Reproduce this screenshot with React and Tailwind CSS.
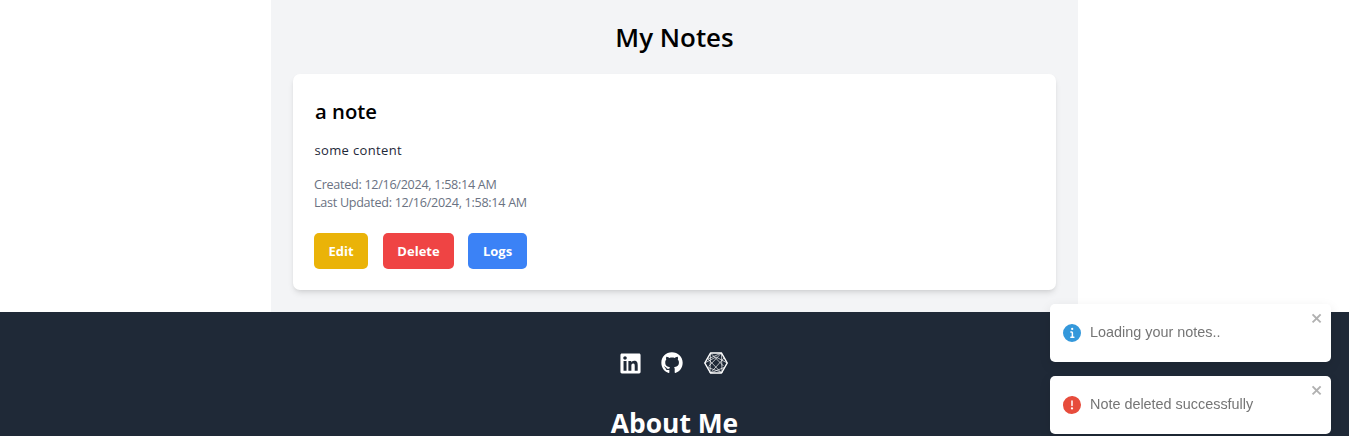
import React from 'react';
import { FaLinkedin, FaGithub } from 'react-icons/fa';

const segoe = "font-['Segoe_UI','Open_Sans','Noto_Sans',sans-serif]";

function NetworkIcon() {
  return (
    <svg viewBox="0 0 24 22" className="h-[22px] w-6" fill="none" stroke="#fff" strokeLinejoin="round">
      <path d="M6.5 1h11L23.2 11l-5.7 10h-11L.8 11z" strokeWidth="1.5" />
      <path
        d="M6.5 1l13 13M17.5 1L4.5 14.5M6.5 21L20 6M17.5 21L4 7M6.5 1L6 21M17.5 1L18 21M4 7L17.5 1M4 15.5l14 5M20 15.5L6.5 21M.8 11L12 5l11.2 6"
        strokeWidth=".8"
        opacity=".85"
      />
    </svg>
  );
}

function InfoIcon() {
  return (
    <svg viewBox="0 0 24 24" className="size-[18px] shrink-0" fill="#3498db">
      <path d="M12 0a12 12 0 1012 12A12.013 12.013 0 0012 0zm.25 5a1.5 1.5 0 11-1.5 1.5 1.5 1.5 0 011.5-1.5zm2.25 13.5h-4a1 1 0 010-2h.75a.25.25 0 00.25-.25v-4.5a.25.25 0 00-.25-.25h-.75a1 1 0 010-2h1a2 2 0 012 2v4.75a.25.25 0 00.25.25h.75a1 1 0 110 2z" />
    </svg>
  );
}

function ErrorIcon() {
  return (
    <svg viewBox="0 0 24 24" className="size-[18px] shrink-0" fill="#e74c3c">
      <path d="M11.983 0a12.206 12.206 0 00-8.51 3.653A11.8 11.8 0 000 12.207 11.779 11.779 0 0011.8 24h.214A12.111 12.111 0 0024 11.791 11.766 11.766 0 0011.983 0zM10.5 16.542a1.476 1.476 0 011.449-1.53h.027a1.527 1.527 0 011.523 1.47 1.475 1.475 0 01-1.449 1.53h-.027a1.529 1.529 0 01-1.523-1.47zM11 12.5v-6a1 1 0 012 0v6a1 1 0 11-2 0z" />
    </svg>
  );
}

function Toast({ icon, children }) {
  return (
    <div className="flex h-[58px] w-[281px] justify-between rounded-[5px] bg-white pl-[13px] pr-[7px] shadow-[0_4px_12px_rgba(0,0,0,0.1)]">
      <div className="flex items-center gap-[9px]">
        {icon}
        <span className="mb-0.5 whitespace-nowrap font-['Liberation_Sans',Arial,sans-serif] text-[14.4px] leading-5 text-[#757575]">
          {children}
        </span>
      </div>
      <button aria-label="close" className="mt-[7px] h-[15px] text-black opacity-30">
        <svg viewBox="0 0 14 16" className="h-[14.4px] w-[12.6px]" fill="currentColor">
          <path
            fillRule="evenodd"
            d="M7.71 8.23l3.75 3.75-1.48 1.48-3.75-3.75-3.75 3.75L1 11.98l3.75-3.75L1 4.48 2.48 3l3.75 3.75L9.98 3l1.48 1.48-3.75 3.75z"
          />
        </svg>
      </button>
    </div>
  );
}

export default function App() {
  return (
    <div className={`h-[436px] w-full overflow-hidden bg-white pr-px ${segoe}`}>
      <main className="mx-auto h-[312px] w-[807px] bg-gray-100 px-[22px] pt-5">
        <h1 className="h-[54px] text-center text-[25.9px] font-semibold leading-[34px] text-black">My Notes</h1>
        <article className="h-[216px] rounded-[7px] bg-white px-[21px] pt-[21px] shadow-md">
          <h2 className="pl-px text-[20.3px] font-semibold leading-8 text-black">a note</h2>
          <p className="mt-[13px] pl-[0.5px] text-[13px] leading-5 tracking-[0.35px] text-gray-800">some content</p>
          <div className="mt-4 text-[12.6px] leading-[18px] tracking-[-0.29px] text-gray-500">
            <p>Created: 12/16/2024, 1:58:14 AM</p>
            <p>Last Updated: 12/16/2024, 1:58:14 AM</p>
          </div>
          <div className="mt-[21px] flex text-[13px] font-bold text-white">
            <button className="h-9 w-[54px] rounded-[5px] bg-[#eab308] pt-0.5">Edit</button>
            <button className="ml-[15px] h-9 w-[71px] rounded-[5px] bg-[#ef4444] pt-0.5">Delete</button>
            <button className="ml-[14px] h-9 w-[59px] rounded-[5px] bg-[#3b82f6] pt-0.5">Logs</button>
          </div>
        </article>
      </main>
      <footer className="h-[124px] bg-[#1f2937] pt-10 text-white">
        <div className="flex h-[22px] items-center justify-center pr-px">
          <FaLinkedin className="h-[23px] w-[21px]" />
          <FaGithub className="ml-5 size-[22px]" />
          <span className="ml-[21px]"><NetworkIcon /></span>
        </div>
        <h2 className="mt-[31px] text-center text-[26.4px] font-bold leading-9">About Me</h2>
      </footer>
      <div className="fixed left-[1050px] top-[304px] flex flex-col gap-[14px]">
        <Toast icon={<InfoIcon />}>Loading your notes..</Toast>
        <Toast icon={<ErrorIcon />}>Note deleted successfully</Toast>
      </div>
    </div>
  );
}
